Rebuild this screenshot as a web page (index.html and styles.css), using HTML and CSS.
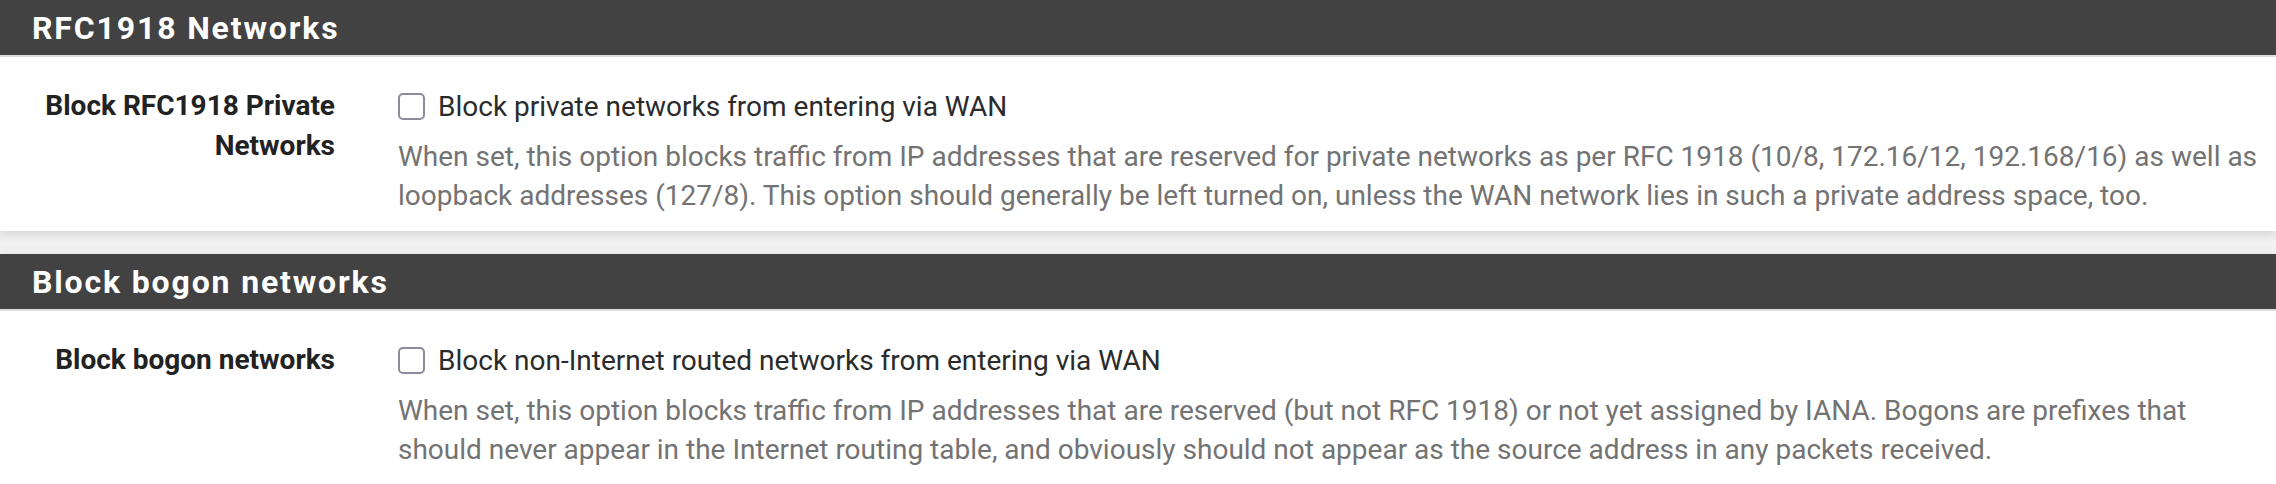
FILE: index.html
```html
<!DOCTYPE html>
<html>
<head>
<meta charset="utf-8">
<link rel="stylesheet" href="styles.css">
</head>
<body>
<div class="page">
  <section class="panel">
    <h2 class="panel-title">RFC1918 Networks</h2>
    <div class="panel-body">
      <div class="form-row">
        <label class="form-label">Block RFC1918 Private Networks</label>
        <div class="form-field">
          <label class="check-line"><input type="checkbox" class="check"><span>Block private networks from entering via WAN</span></label>
          <p class="help">When set, this option blocks traffic from IP addresses that are reserved for private networks as per RFC 1918 (10/8, 172.16/12, 192.168/16) as well as loopback addresses (127/8). This option should generally be left turned on, unless the WAN network lies in such a private address space, too.</p>
        </div>
      </div>
    </div>
  </section>
  <section class="panel">
    <h2 class="panel-title">Block bogon networks</h2>
    <div class="panel-body">
      <div class="form-row">
        <label class="form-label">Block bogon networks</label>
        <div class="form-field">
          <label class="check-line"><input type="checkbox" class="check"><span>Block non-Internet routed networks from entering via WAN</span></label>
          <p class="help">When set, this option blocks traffic from IP addresses that are reserved (but not RFC 1918) or not yet assigned by IANA. Bogons are prefixes that should never appear in the Internet routing table, and obviously should not appear as the source address in any packets received.</p>
        </div>
      </div>
    </div>
  </section>
</div>
</body>
</html>
```

FILE: styles.css
```css
html, body {
  margin: 0;
  padding: 0;
  background: #f1f1f1;
  font-family: Roboto, "Liberation Sans", sans-serif;
}

.page {
  display: flex;
  flex-direction: column;
  gap: 23px;
}

.panel {
  background: #ffffff;
  box-shadow: 0 3px 10px rgba(0, 0, 0, 0.13);
}

.panel-title {
  margin: 0;
  height: 55px;
  line-height: 57px;
  padding-left: 32px;
  background: #424242;
  color: #ffffff;
  font-size: 32px;
  font-weight: 700;
  letter-spacing: 1.85px;
}

.panel-body {
  border-top: 2px solid #dddddd;
  padding: 29px 14px 16px 0;
}

.form-row {
  display: grid;
  grid-template-columns: 335px 1fr;
  column-gap: 63px;
}

.form-label {
  text-align: right;
  font-weight: 700;
  font-size: 28px;
  line-height: 40px;
  color: #222222;
}

.form-field {
  margin-top: 1px;
}

.check-line {
  display: flex;
  align-items: center;
  gap: 13px;
  font-size: 28px;
  line-height: 39px;
  color: #2b2b2b;
}

.check {
  appearance: none;
  -webkit-appearance: none;
  margin: 0;
  width: 27px;
  height: 27px;
  border: 2px solid #8d8a9a;
  border-radius: 5px;
  background: #ffffff;
  flex: none;
}

.help {
  margin: 11px 0 0 0;
  font-size: 28px;
  line-height: 39px;
  color: #737373;
}
```
